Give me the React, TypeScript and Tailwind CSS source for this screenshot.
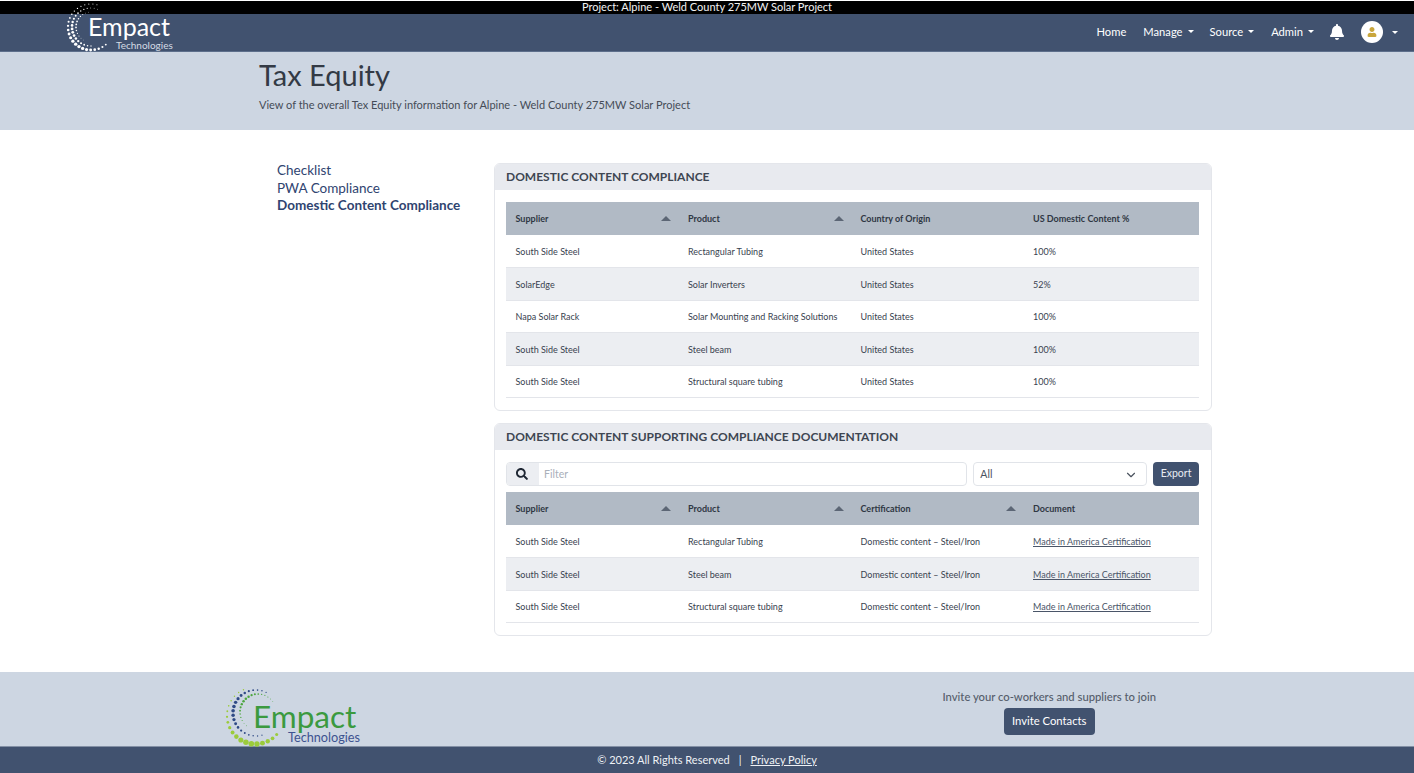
import React from 'react';
import { ChevronDown } from 'lucide-react';
import { FaBell, FaSearch, FaUser } from 'react-icons/fa';

const complianceRows = [
  ['South Side Steel', 'Rectangular Tubing', 'United States', '100%'],
  ['SolarEdge', 'Solar Inverters', 'United States', '52%'],
  ['Napa Solar Rack', 'Solar Mounting and Racking Solutions', 'United States', '100%'],
  ['South Side Steel', 'Steel beam', 'United States', '100%'],
  ['South Side Steel', 'Structural square tubing', 'United States', '100%'],
];

const documentRows = [
  ['South Side Steel', 'Rectangular Tubing', 'Domestic content – Steel/Iron'],
  ['South Side Steel', 'Steel beam', 'Domestic content – Steel/Iron'],
  ['South Side Steel', 'Structural square tubing', 'Domestic content – Steel/Iron'],
];

type Arc = { cx: number; cy: number; r: number; from: number; to: number; n: number; peak: number; spread: number; min: number; max: number; fill: string };

const navLogoArcs: Arc[] = [
  { cx: 25, cy: 23, r: 23, from: 50, to: 285, n: 24, peak: 125, spread: 75, min: 0.5, max: 1.7, fill: '#ffffff' },
  { cx: 25, cy: 23, r: 19, from: 90, to: 290, n: 20, peak: 165, spread: 65, min: 0.4, max: 1.4, fill: '#ffffff' },
  { cx: 25, cy: 23, r: 15, from: 120, to: 260, n: 13, peak: 190, spread: 45, min: 0.3, max: 0.9, fill: '#ffffff' },
];

const footerLogoArcs: Arc[] = [
  { cx: 29.5, cy: 27.5, r: 28.5, from: 42, to: 245, n: 19, peak: 100, spread: 60, min: 0.7, max: 2.8, fill: '#9bcb3c' },
  { cx: 30, cy: 25, r: 23, from: 75, to: 296, n: 21, peak: 190, spread: 65, min: 0.6, max: 1.8, fill: '#2f4a86' },
  { cx: 32, cy: 24, r: 18, from: 130, to: 325, n: 19, peak: 225, spread: 55, min: 0.4, max: 1.3, fill: '#4da63f' },
];

// logo ring, each arc is a row of dots that swell around one angle
function LogoDots({ arcs, size }: { arcs: Arc[]; size: number }) {
  return (
    <svg viewBox={`0 0 ${size} ${size}`} width={size} height={size} className="absolute left-0 top-0 overflow-visible">
      {arcs.flatMap((arc, k) =>
        Array.from({ length: arc.n }, (_, i) => {
          const deg = arc.from + ((arc.to - arc.from) * i) / (arc.n - 1);
          const rad = (deg * Math.PI) / 180;
          const radius = arc.min + (arc.max - arc.min) * Math.exp(-(((deg - arc.peak) / arc.spread) ** 2));
          return <circle key={`${k}-${i}`} cx={arc.cx + arc.r * Math.cos(rad)} cy={arc.cy + arc.r * Math.sin(rad)} r={radius} fill={arc.fill} />;
        }),
      )}
    </svg>
  );
}

function Caret() {
  return <span className="h-0 w-0 border-x-[3px] border-t-[3px] border-x-transparent border-t-white" />;
}

function SortArrow() {
  return <span className="h-0 w-0 border-x-[5px] border-b-[5px] border-x-transparent border-b-[#5c6675]" />;
}

function DataTable({ heads, sorted, children }: { heads: string[]; sorted: number; children: React.ReactNode }) {
  return (
    <table className="w-full table-fixed border-collapse text-[9px] text-[#39424f]">
      <thead>
        <tr className="h-[33px] bg-[#b1bac5] text-[#2f3743]">
          {heads.map((h, i) => (
            <th key={h} className={`pl-[9.5px] pr-[7.5px] text-left font-bold ${i < 3 ? 'w-[172.5px]' : ''}`}>
              <div className="flex items-center justify-between">
                <span>{h}</span>
                {i < sorted && <SortArrow />}
              </div>
            </th>
          ))}
        </tr>
      </thead>
      <tbody>{children}</tbody>
    </table>
  );
}

function Card({ title, className, children }: { title: string; className: string; children: React.ReactNode }) {
  return (
    <section className={`overflow-hidden rounded-md border border-[#e4e6eb] bg-white ${className}`}>
      <h2 className="flex h-[26px] items-center bg-[#e8eaef] px-[11px] text-[12px] font-bold text-[#3e4652]">{title}</h2>
      <div className="pl-[11px] pr-3">{children}</div>
    </section>
  );
}

export default function App() {
  return (
    <div className="flex h-[773px] w-[1414px] flex-col overflow-hidden bg-white font-[Lato,sans-serif]">
      <div className="mt-px flex h-[13px] shrink-0 items-center justify-center bg-black text-[11px] text-[#f2f2f2]">
        Project: Alpine - Weld County 275MW Solar Project
      </div>

      <nav className="flex h-[38px] shrink-0 items-center justify-between border-b border-[#5d6f8b] bg-[#41526f] pl-[66px] pr-[16px] text-white">
        <div className="relative -mt-[10px] h-[48px] w-[110px]">
          <LogoDots arcs={navLogoArcs} size={50} />
          <span className="absolute left-[22px] top-[10px] text-[25px] leading-none text-white">Empact</span>
          <span className="absolute left-[50px] top-[36px] text-[10px] leading-none text-[#d5dbe5]">Technologies</span>
        </div>
        <div className="-mt-px flex items-center text-[11.2px]">
          <span className="mr-[17px]">Home</span>
          <span className="mr-[16px] flex items-center gap-[5px]">Manage<Caret /></span>
          <span className="mr-[17px] flex items-center gap-[5px]">Source<Caret /></span>
          <span className="mr-[15px] flex items-center gap-[5px]">Admin<Caret /></span>
          <FaBell size={16} className="mr-[16px] text-white" />
          <span className="mr-[9px] flex h-[22px] w-[22px] items-center justify-center rounded-full bg-white">
            <FaUser size={10} className="text-[#c9a63c]" />
          </span>
          <Caret />
        </div>
      </nav>

      <header className="h-[78px] shrink-0 bg-[#cdd6e2] pl-[259px] pt-[6px] text-[#333a45]">
        <h1 className="text-[29px] leading-[34px]">Tax Equity</h1>
        <p className="mt-[6px] text-[11px] leading-[14px] text-[#454c57]">
          View of the overall Tex Equity information for Alpine - Weld County 275MW Solar Project
        </p>
      </header>

      <main className="flex grow pl-[277px] pt-[32px]">
        <ul className="w-[217px] shrink-0 text-[13.5px] leading-[17.5px] text-[#2f4470]">
          <li>Checklist</li>
          <li>PWA Compliance</li>
          <li className="font-bold">Domestic Content Compliance</li>
        </ul>
        <div className="mt-px flex w-[718px] flex-col gap-3">
          <Card title="DOMESTIC CONTENT COMPLIANCE" className="h-[248px]">
            <div className="pt-3">
              <DataTable heads={['Supplier', 'Product', 'Country of Origin', 'US Domestic Content %']} sorted={2}>
                {complianceRows.map((r, i) => (
                  <tr key={i} className={`h-[32.5px] border-b border-[#e3e5ea] ${i % 2 === 1 ? 'bg-[#eceef2]' : 'bg-white'}`}>
                    {r.map((c, j) => (
                      <td key={j} className="whitespace-nowrap pl-[9.5px] pt-px">{c}</td>
                    ))}
                  </tr>
                ))}
              </DataTable>
            </div>
          </Card>

          <Card title="DOMESTIC CONTENT SUPPORTING COMPLIANCE DOCUMENTATION" className="h-[213px]">
            <div className="mb-[6px] mt-3 flex h-[24px] items-stretch gap-[6px]">
              <div className="flex w-[462px] overflow-hidden rounded border border-[#e1e4e9]">
                <span className="flex w-[32px] items-center justify-center bg-[#eceef2] pr-[2px]">
                  <FaSearch size={12} className="text-[#1f2733]" />
                </span>
                <span className="flex grow items-center px-[5px] pt-px text-[10.5px] text-[#aab0ba]">Filter</span>
              </div>
              <div className="flex w-[174px] items-center justify-between rounded border border-[#e1e4e9] px-[6px] pt-px text-[10.5px] text-[#4b535f]">
                <span>All</span>
                <ChevronDown size={14} className="mr-[2px] text-[#4b535f]" />
              </div>
              <button className="w-[46px] rounded bg-[#41526f] text-[10.5px] text-[#e8ecf2]">Export</button>
            </div>
            <DataTable heads={['Supplier', 'Product', 'Certification', 'Document']} sorted={3}>
              {documentRows.map((r, i) => (
                <tr key={i} className={`h-[32.5px] border-b border-[#e3e5ea] ${i % 2 === 1 ? 'bg-[#eceef2]' : 'bg-white'}`}>
                  {r.map((c, j) => (
                    <td key={j} className="whitespace-nowrap pl-[9.5px] pt-px">{c}</td>
                  ))}
                  <td className="whitespace-nowrap pl-[9.5px] pt-px text-[#4a5568] underline">Made in America Certification</td>
                </tr>
              ))}
            </DataTable>
          </Card>
        </div>
      </main>

      <div className="flex h-[74px] shrink-0 justify-between bg-[#cdd6e2] pl-[226px] pr-[258px]">
        <div className="relative mt-[16px] h-[58px] w-[140px]">
          <LogoDots arcs={footerLogoArcs} size={60} />
          <span className="absolute left-[27px] top-[14px] text-[31.5px] leading-[28px] text-[#3b9a3f]">Empact</span>
          <span className="absolute left-[62px] top-[43px] text-[12.7px] leading-none text-[#3d5390]">Technologies</span>
        </div>
        <div className="flex flex-col items-center pt-[18px]">
          <p className="text-[11.25px] font-medium leading-[14px] text-[#555d6b]">Invite your co-workers and suppliers to join</p>
          <button className="mt-[4px] h-[27px] w-[91px] rounded bg-[#41526f] text-[11.25px] text-white">Invite Contacts</button>
        </div>
      </div>

      <footer className="flex h-[27px] shrink-0 items-center justify-center border-t border-[#8390a5] bg-[#41526f] text-[11px] text-[#eef1f5]">
        <span>© 2023 All Rights Reserved</span>
        <span className="mx-[9px]">|</span>
        <span className="underline">Privacy Policy</span>
      </footer>
    </div>
  );
}
